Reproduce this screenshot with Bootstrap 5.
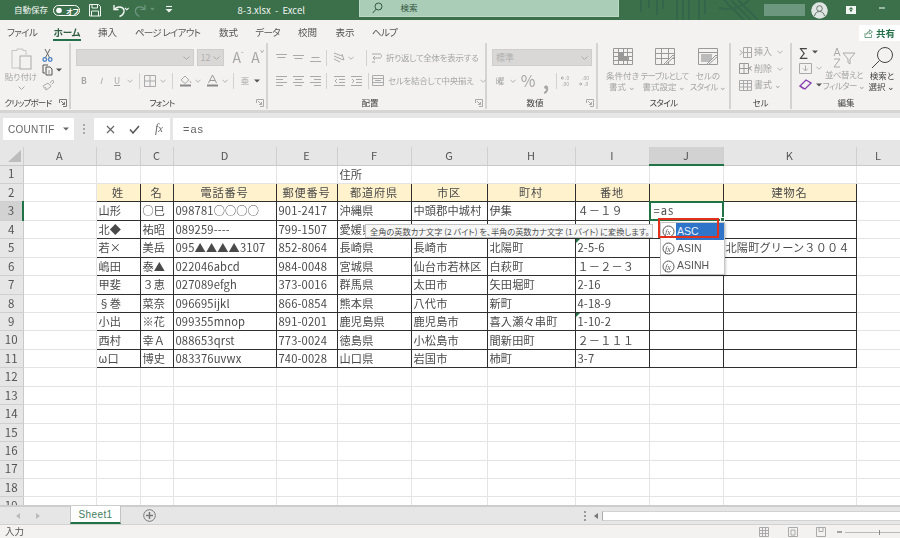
<!DOCTYPE html>
<html lang="ja">
<head>
<meta charset="utf-8">
<title>8-3.xlsx - Excel</title>
<link href="https://cdn.jsdelivr.net/npm/bootstrap@5.3.0/dist/css/bootstrap.min.css" rel="stylesheet">
<style>
html,body{margin:0;height:538px;overflow:hidden;background:#f3f2f1}
body{font-family:"Liberation Sans","Noto Sans CJK JP",sans-serif;color:#444;font-size:10px;line-height:1.1}
.xl-app{width:900px;height:538px;overflow:hidden;filter:blur(.35px)}
.ui{font-family:"Noto Sans CJK JP","Liberation Sans",sans-serif;font-feature-settings:"palt"}
.cj{font-family:"Noto Sans CJK JP",sans-serif}
.lib{font-family:"Liberation Sans",sans-serif}
svg{display:block;flex:none}
/* title bar */
.xl-title{height:20px;background:#3b704b;color:#f2f6f3;font-size:10px}
.xl-left{width:360px}
.xl-auto{margin-left:14px;width:35px;white-space:nowrap;font-size:8.5px}
.xl-doc{font-size:9.5px}
.xl-search{width:260px;height:17px;background:#a9cdb6;border:1px solid #bcd9c5;border-top:0;color:#33543f;font-size:8.5px;padding-left:12px;gap:9px;margin-bottom:3px}
.xl-blurname{width:41px;height:12px;margin:0 6px 0 0;background:#6e977f}
/* tabs */
.xl-tabs{height:23px;display:grid;grid-template-columns:44px 46px 35px 85px 37px 41px 39px 36px 43px 1fr;align-items:center;font-size:9.5px;color:#555;padding-top:1px}
.xl-tab{text-align:center;white-space:nowrap}
.xl-kn{letter-spacing:-.7px}
.xl-home{color:#2f5f40;font-weight:700}
.xl-home span{display:inline-block;border-bottom:2px solid #24704a;padding-bottom:2px;margin-bottom:-4px}
.xl-share{justify-self:end;width:41px;height:16px;background:#fff;color:#24704a;font-weight:700;font-size:9.5px;gap:3px;margin-top:2px}
/* ribbon */
.xl-ribbon{height:67px;display:flex;font-size:8.5px;color:#a6a6a6}
.rg{display:flex;flex-direction:column;height:66px;border-right:2px solid #d4d3d2;flex:none}
.rg-clip{width:71px}.rg-font{width:197px}.rg-align{width:219px}.rg-num{width:111px}.rg-style{width:133px}.rg-cell{width:61px}
.rg-edit{width:108px;border-right:0}
.rbody{flex:1;min-height:0}
.rlabel{height:12px;display:flex;align-items:center;color:#444;font-size:8.5px;white-space:nowrap}
.rlabel>span{flex:1;text-align:center}
.rlabel>svg{margin:0 2px 0 3px}
.nk{letter-spacing:-.8px}
.nk2{letter-spacing:-.6px}
.pad5{padding:5px 0 0 5px}
.rw{height:23px;display:flex;align-items:center}
.rw1{height:19px;margin-bottom:2px}
.u6{width:6px}.u8{width:8px}.u10{width:10px}.u12{width:12px}.u14{width:14px}.u16{width:16px}.u17{width:17px}.u18{width:18px}.u20{width:20px}
.u6,.u8,.u10,.u12,.u14,.u16,.u17,.u18,.u20{display:flex;justify-content:center;align-items:center;flex:none;height:16px}
.vs{width:1px;height:16px;background:#d2d1d0;flex:none}
.m3{margin:0 3px}.m5{margin:0 3px 0 5px}
.dis-box{height:17px;background:#d9d8d7;border:1px solid #cfcecd;color:#b0b0b0;font-size:9px;padding:0 3px}
.box-name{width:121px}.box-size{width:28px;margin-left:3px}.box-num{width:100px}
.xa{font-size:14px}
.xa sup{font-size:8px;top:-.5em}
.xl-big{display:flex;flex-direction:column;align-items:center;text-align:center;line-height:11px;white-space:nowrap;flex:none}
.xl-big svg{margin-bottom:1px}
.xl-sty .xl-big svg{margin-bottom:5px}
.big-paste{width:34px;margin-left:4px}
.big-s1{width:41px}.big-s2{width:43px}.big-s3{width:44px}
.big-e2{width:40px}.big-e3{width:36px;color:#444}
.sm-col{height:50px;display:flex;flex-direction:column}
.sm-row{height:16.5px;display:flex;align-items:center}
.ml-2px{margin-left:2px}.ml-3px{margin-left:3px}
.cell-ic{width:18px;margin-left:5px;display:flex;justify-content:center}
.cell-tx{width:23px;white-space:nowrap;font-size:9px}
.wrap-tx{white-space:nowrap;margin-left:3px;letter-spacing:-.3px}
.xl-v2{margin-left:11px}.xl-v3{margin-left:3px}
.xl-cells{padding-top:1px}.xl-sty{padding-top:5px}.xl-eb{padding-top:4px}.xl-edc{padding:1px 0 0 7px;width:32px}
.xl-sig{font-size:15px;color:#444;line-height:1}
.xl-comma{line-height:.6}
/* formula */
.xl-fbar{height:37px;background:#e6e6e6;border-top:3px solid #d6d5d4;padding:5px 0 0 3px;align-items:flex-start;color:#666}
.xl-name{width:71px;height:22px;background:#fff;font-size:10px;padding:0 5px;letter-spacing:.3px}
.xl-dots{width:20px;height:22px}
.xl-btns{width:76px;height:22px;background:#fff;padding:0 7px 0 12px}
.xl-fx{font-family:"Liberation Serif",serif;font-size:12px}
.xl-form{flex:1;height:22px;background:#fff;margin-left:3px;padding-left:10px;font-size:11px;letter-spacing:1px}
/* grid */
.xl-sheet{position:relative;height:358px;overflow:hidden;background:#fff}
.xl-grid{table-layout:fixed;border-collapse:collapse;width:900px;font-size:11.2px;color:#4a4a4a;font-feature-settings:normal;letter-spacing:.15px}
.c0{width:23px}.ca{width:73px}.cb{width:44px}.cc{width:33px}.cd{width:103px}.ce{width:61px}.cf{width:74px}.cg{width:76px}.ch{width:88px}.ci{width:74px}.cj2{width:74px}.ck{width:133px}.cl{width:44px}
.xl-grid th,.xl-grid td{padding:0 2px;white-space:nowrap;overflow:hidden;vertical-align:middle;line-height:1}
.xl-grid thead th{height:18px;background:#e6e6e6;border-right:1px solid #cfcfcf;border-bottom:1px solid #c9c9c9;text-align:center;font-weight:400;font-size:11px;color:#555}
.xl-grid tbody th{background:#e6e6e6;border-right:1px solid #c9c9c9;border-bottom:1px solid #cfcfcf;text-align:center;font-weight:400;font-size:11.5px;color:#555;padding:0}
.xl-grid tbody tr{height:18.45px}
.xl-grid td{border:1px solid #e4e4e4}
.xl-grid td.bx{border:1px solid #2f2f2f}
.xl-grid td.hd{background:#fff2cc;text-align:center;letter-spacing:.8px}
.xl-grid td.xl-eq{padding-left:4px;letter-spacing:1px}
.xl-grid thead th.sel{background:#d2d2d2;border-bottom:2px solid #217346}
.xl-grid tbody th.sel{background:#d2d2d2;border-right:2px solid #217346}
.tri{position:relative}
.tri::before{content:"";position:absolute;left:0;top:0;border-top:4px solid #217346;border-right:4px solid transparent}
.xl-active{position:absolute;left:649px;top:54px;width:75px;height:20px;border:2px solid #217346}
.xl-active::after{content:"";position:absolute;right:-3px;bottom:-3px;width:5px;height:5px;background:#217346;border:1px solid #fff}
.xl-tip{position:absolute;left:365px;top:77px;width:288px;height:14px;background:#f7f7f7;border:1px solid #c4c4c4;font-size:8.2px;color:#4d4d4d;padding-left:4px;white-space:nowrap;line-height:12px}
.xl-menu{position:absolute;left:660px;top:75px;width:65px;height:53px;background:#fff;border:1px solid #c6c6c6;box-shadow:1px 1px 2px rgba(0,0,0,.2);font-size:10.5px;color:#555}
.xl-item{height:17.3px;padding-left:1px;gap:1px}
.xl-item span{flex:1;height:100%;display:flex;align-items:center;padding-left:1px}
.xl-item.on span{background:#2e74c8;color:#e9f1fb}
.xl-red{position:absolute;left:658px;top:71px;width:61px;height:20px;border:2px solid #e1301e}
/* tab bar */
.xl-sheets{height:20px;background:#e6e6e6;border-top:2px solid #cdcdcd;border-bottom:1px solid #d2d2d2}
.xl-nav{width:70px;padding-left:16px;gap:16px}
.xl-stab{width:51px;height:18px;margin-top:-2px;background:#fff;border-left:1px solid #c4c4c4;border-right:1px solid #c4c4c4;border-bottom:2px solid #217346;color:#3f7d5c;font-size:10px;text-align:center;line-height:17px;letter-spacing:.4px;flex:none}
.xl-plus{margin-left:22px}
.xl-mid{flex:1}
.xl-track{width:298px;height:10px;background:#fff;border-left:1px solid #aaa;border-top:1px solid #d2d2d2;border-bottom:1px solid #d2d2d2}
/* status */
.xl-status{height:13px;background:#f3f2f1;font-size:9.5px;color:#555;padding-left:5px}
</style>
</head>
<body>
<div class="xl-app ui d-flex flex-column">

<!-- title bar -->
<div class="xl-title d-flex align-items-center">
  <div class="xl-left d-flex align-items-center">
    <span class="xl-auto">自動保存</span>
    <svg class="ms-1" width="27" height="11" viewBox="0 0 27 11"><rect x=".5" y=".5" width="26" height="10" rx="5" fill="none" stroke="#fff"/><circle cx="6" cy="5.5" r="2.8" fill="#fff"/><text x="13" y="8.5" font-size="7" fill="#fff" font-weight="700" font-family="Noto Sans CJK JP">オフ</text></svg>
    <svg class="ms-2" width="95" height="20" viewBox="0 0 95 20" fill="none" stroke="#f2f6f3">
      <path d="M1.5 4.5h9l2 2v9.5h-11z"/><path d="M4 4.5v3.5h5.5v-3.5M3.5 16v-5h7v5"/>
      <path d="M26 5v4.5h4.5" stroke-width="1.4"/><path d="M26.5 9.5c2-3.5 8.500-3.500 9.500 .5 .5 3-2 5.500-4.500 6.500" stroke-width="1.4"/>
      <path d="M37 8l1.800 1.800 1.800-1.800" stroke-width="1.100"/>
      <g stroke="#6f9880" stroke-width="1.200"><path d="M57 5v4.500h-4.500"/><path d="M56.500 9.500c-2-3.500-8-3.500-9 .5-.5 3 2 5.500 4 6.500"/><path d="M63 8l1.500 1.500 1.500-1.500"/></g>
      <path d="M78 6.500h6" stroke-width="1.100"/><path d="M77.500 9l3.500 3.500 3.500-3.500z" fill="#f2f6f3" stroke="none"/>
    </svg>
    <span class="xl-doc flex-grow-1 text-center">8-3.xlsx &nbsp;-&nbsp; Excel</span>
  </div>
  <div class="xl-search d-flex align-items-center align-self-start">
    <svg width="11" height="12" viewBox="0 0 11 12" fill="none" stroke="#2e5a40"><circle cx="6.500" cy="4.500" r="3.500"/><path d="M4 7.200L.8 11"/></svg>
    <span class="ms-2">検索</span>
  </div>
  <svg width="145" height="20" viewBox="0 0 145 20" fill="none" stroke="#33664a" stroke-width="2"><path d="M22 0v12M30 0v8M38 0v15M44 0v9M58 0v20M64 0v20M70 0v20M80 0v20M86 0v14M105 0l20 20M112 0l20 20M119 0l20 20M100 8c10 2 20 2 30-8"/></svg>
  <span class="xl-blurname"></span>
  <svg width="17" height="17" viewBox="0 0 17 17"><circle cx="8.500" cy="8.500" r="8.300" fill="#dfe6e1"/><circle cx="8.500" cy="6.500" r="2.800" fill="none" stroke="#68736c"/><path d="M3.500 14c.5-3 2.500-4.500 5-4.500s4.500 1.500 5 4.500" fill="none" stroke="#68736c"/></svg>
  <svg width="72" height="20" viewBox="0 0 72 20"><rect x="18" y="6" width="10" height="8" fill="#f2f6f3"/><path d="M23 7l-2.500 2.500h5zM22 9h2v2.500h-2z" fill="#3b704b"/><path d="M51 8h6" stroke="#d8e4dc" stroke-width="1.200"/></svg>
</div>

<!-- ribbon tabs -->
<div class="xl-tabs">
  <span class="xl-tab xl-kn">ファイル</span>
  <span class="xl-tab xl-home"><span>ホーム</span></span>
  <span class="xl-tab">挿入</span>
  <span class="xl-tab xl-kn">ページ レイアウト</span>
  <span class="xl-tab">数式</span>
  <span class="xl-tab xl-kn">データ</span>
  <span class="xl-tab">校閲</span>
  <span class="xl-tab">表示</span>
  <span class="xl-tab xl-kn">ヘルプ</span>
  <span class="xl-share d-flex align-items-center justify-content-center">
    <svg width="9" height="9" viewBox="0 0 9 9" fill="none" stroke="#6f9f84"><path d="M1 4v4.500h6.500V5.500M2.500 5.500c0-2 1.500-3 3-3V.8L8.500 3 5.500 5V3.800c-1.200 0-2.500.5-3 1.700z"/></svg>共有</span>
</div>

<!-- ribbon -->
<div class="xl-ribbon">
  <!-- clipboard -->
  <div class="rg rg-clip">
    <div class="rbody d-flex">
      <div class="xl-big big-paste pt-1">
        <svg width="21" height="23" viewBox="0 0 21 23" fill="none" stroke="#c4c3c2"><path d="M3 3.500h3V2h6v1.500h3V8M9 21H1V3.500h2" /><rect x="9" y="9" width="11" height="13" stroke="#aaa"/></svg>
        <span>貼り付け</span>
        <svg class="mt-1" width="7" height="4" viewBox="0 0 7 4" fill="none" stroke="#aaa"><path d="M.5.500l3 3 3-3"/></svg>
      </div>
      <div class="sm-col ms-1 pt-1">
        <div class="sm-row"><svg width="11" height="14" viewBox="0 0 11 14" fill="none" stroke="#666"><path d="M3 1l4.500 8.500M8 1L3.500 9.500"/><circle cx="2.800" cy="11.500" r="1.800" stroke="#4a80c4" stroke-width="1.300"/><circle cx="8.200" cy="11.500" r="1.800" stroke="#4a80c4" stroke-width="1.300"/></svg></div>
        <div class="sm-row"><svg width="11" height="12" viewBox="0 0 11 12" fill="none" stroke="#555"><path d="M6 1H1v8h2"/><path d="M4 3h4l2 2v6H4z"/><path d="M6 7h2M6 9h2" stroke="#999"/></svg><svg class="ml-3px" width="6" height="4" viewBox="0 0 6 4"><path d="M0 .5h6L3 3.500z" fill="#555"/></svg></div>
        <div class="sm-row"><svg width="12" height="12" viewBox="0 0 12 12" fill="none" stroke="#aaa"><path d="M1 7l5-3 3 3.500-5 3.500zM8 4l2.500-3L12 3 9.500 5.500"/><path d="M3 8l1.500 1.500"/></svg></div>
      </div>
    </div>
    <div class="rlabel"><span class="nk">クリップボード</span><svg width="8" height="8" viewBox="0 0 8 8" fill="none" stroke="#777"><path d="M.5 4V.5H7.500V7.500H4M2 2l3.500 3.500M5.500 3v2.500H3"/></svg></div>
  </div>

  <!-- font -->
  <div class="rg rg-font">
    <div class="rbody pad5">
      <div class="rw rw1">
        <div class="dis-box box-name d-flex align-items-center justify-content-end"><svg width="7" height="4" viewBox="0 0 7 4" fill="none" stroke="#aaa"><path d="M.5.500l3 3 3-3"/></svg></div>
        <div class="dis-box box-size d-flex align-items-center justify-content-between"><span>12</span><svg width="7" height="4" viewBox="0 0 7 4" fill="none" stroke="#aaa"><path d="M.5.500l3 3 3-3"/></svg></div>
        <span class="u20 xa ms-1">A<sup>ˆ</sup></span>
        <span class="u16 xa ml-2px">A<sup>ˇ</sup></span>
      </div>
      <div class="rw">
        <span class="u16 fw-bold">B</span><span class="u18 fst-italic">I</span><span class="u14 text-decoration-underline">U</span>
        <span class="u12"><svg width="6" height="4" viewBox="0 0 7 4" fill="none" stroke="#aaa"><path d="M.5.500l3 3 3-3"/></svg></span>
        <span class="vs m3"></span>
        <span class="u14"><svg width="12" height="12" viewBox="0 0 12 12" fill="none" stroke="#aaa"><path d="M.5.500h11v11H.5zM6 .5v11M.5 6h11"/></svg></span>
        <span class="u12"><svg width="6" height="4" viewBox="0 0 7 4" fill="none" stroke="#aaa"><path d="M.5.500l3 3 3-3"/></svg></span>
        <span class="vs m3"></span>
        <span class="u18"><svg width="13" height="13" viewBox="0 0 13 13" fill="none" stroke="#aaa"><path d="M2 6l4-4 4 4-4 3.500zM11 7l1 2"/><path d="M1 11.500h11" stroke="#888" stroke-width="2"/></svg></span>
        <span class="u8"><svg width="6" height="4" viewBox="0 0 7 4" fill="none" stroke="#aaa"><path d="M.5.500l3 3 3-3"/></svg></span>
        <span class="u20"><svg width="13" height="13" viewBox="0 0 13 13" fill="none" stroke="#999"><path d="M2.500 9L6.500 1l4 8M4 6.500h5"/><path d="M1 11.500h11" stroke="#888" stroke-width="2"/></svg></span>
        <span class="u6"><svg width="6" height="4" viewBox="0 0 7 4" fill="none" stroke="#aaa"><path d="M.5.500l3 3 3-3"/></svg></span>
        <span class="vs m5"></span>
        <span class="u16">亜</span>
        <span class="u8"><svg width="6" height="4" viewBox="0 0 6 4"><path d="M0 .5h6L3 3.500z" fill="#555"/></svg></span>
      </div>
    </div>
    <div class="rlabel"><span class="nk2">フォント</span><svg width="8" height="8" viewBox="0 0 8 8" fill="none" stroke="#aaa"><path d="M.5 4V.5H7.500V7.500H4M2 2l3.500 3.500M5.500 3v2.500H3"/></svg></div>
  </div>

  <!-- alignment -->
  <div class="rg rg-align">
    <div class="rbody pad5">
      <div class="rw rw1">
        <span class="u17"><svg width="11" height="8" viewBox="0 0 11 8" stroke="#aaa"><path d="M0 .5h11M1.500 3.500h8"/></svg></span>
        <span class="u17"><svg width="11" height="8" viewBox="0 0 11 8" stroke="#aaa"><path d="M0 1.500h11M1.500 4.500h8"/></svg></span>
        <span class="u17"><svg width="11" height="8" viewBox="0 0 11 8" stroke="#aaa"><path d="M1.500 3.500h8M0 7.500h11"/></svg></span>
        <span class="vs ml-2px me-1"></span>
        <span class="u16"><svg width="12" height="12" viewBox="0 0 12 12" fill="none" stroke="#aaa"><path d="M1 1l8 3M1 4l7 3M1 7l6 3M9 2l2 6-3-1"/></svg></span>
        <span class="u8"><svg width="6" height="4" viewBox="0 0 7 4" fill="none" stroke="#aaa"><path d="M.5.500l3 3 3-3"/></svg></span>
        <span class="vs xl-v2"></span>
        <span class="u14 ml-2px"><svg width="11" height="12" viewBox="0 0 11 12" fill="none" stroke="#aaa"><path d="M1 2h8c2 0 2 4 0 4H2l2-2M2 6l2 2M1 10h3"/></svg></span>
        <span class="wrap-tx">折り返して全体を表示する</span>
      </div>
      <div class="rw">
        <span class="u17"><svg width="11" height="10" viewBox="0 0 11 10" stroke="#aaa"><path d="M0 .5h11M0 3.500h7M0 6.500h11M0 9.500h7"/></svg></span>
        <span class="u17"><svg width="11" height="10" viewBox="0 0 11 10" stroke="#aaa"><path d="M0 .5h11M2 3.500h7M0 6.500h11M2 9.500h7"/></svg></span>
        <span class="u17"><svg width="11" height="10" viewBox="0 0 11 10" stroke="#aaa"><path d="M0 .5h11M4 3.500h7M0 6.500h11M4 9.500h7"/></svg></span>
        <span class="vs ml-2px me-1"></span>
        <span class="u17"><svg width="11" height="10" viewBox="0 0 11 10" fill="none" stroke="#aaa"><path d="M0 .5h11M5 3.500h6M5 6.500h6M0 9.500h11M3 3l-2 2 2 2"/></svg></span>
        <span class="u17"><svg width="11" height="10" viewBox="0 0 11 10" fill="none" stroke="#aaa"><path d="M0 .5h11M5 3.500h6M5 6.500h6M0 9.500h11M1 3l2 2-2 2"/></svg></span>
        <span class="vs xl-v3"></span>
        <span class="u14 ml-2px"><svg width="12" height="11" viewBox="0 0 12 11" fill="none" stroke="#aaa"><path d="M.5.500h11v10H.5zM.5 3.500h11M.5 7.500h11M3 5.500h6"/></svg></span>
        <span class="wrap-tx">セルを結合して中央揃え</span>
        <span class="u10 ms-1"><svg width="6" height="4" viewBox="0 0 7 4" fill="none" stroke="#aaa"><path d="M.5.500l3 3 3-3"/></svg></span>
      </div>
    </div>
    <div class="rlabel"><span>配置</span><svg width="8" height="8" viewBox="0 0 8 8" fill="none" stroke="#aaa"><path d="M.5 4V.5H7.500V7.500H4M2 2l3.500 3.500M5.500 3v2.500H3"/></svg></div>
  </div>

  <!-- number -->
  <div class="rg rg-num">
    <div class="rbody pad5">
      <div class="rw rw1">
        <div class="dis-box box-num d-flex align-items-center justify-content-between"><span>標準</span><svg width="7" height="4" viewBox="0 0 7 4" fill="none" stroke="#aaa"><path d="M.5.500l3 3 3-3"/></svg></div>
      </div>
      <div class="rw">
        <span class="u16">曜</span>
        <span class="u10"><svg width="6" height="4" viewBox="0 0 7 4" fill="none" stroke="#aaa"><path d="M.5.500l3 3 3-3"/></svg></span>
        <span class="u20 fs-6">%</span>
        <span class="u16 fw-bold fs-5 xl-comma">,</span>
        <span class="vs ml-2px"></span>
        <span class="u20"><svg width="12" height="12" viewBox="0 0 12 12" fill="none" stroke="#aaa"><path d="M3 3H0M1.500 1.500L0 3l1.500 1.500"/><text x="4" y="5" font-size="5" fill="#aaa" stroke="none">.0</text><text x="1" y="11" font-size="5" fill="#aaa" stroke="none">.00</text></svg></span>
        <span class="u16"><svg width="12" height="12" viewBox="0 0 12 12" fill="none" stroke="#aaa"><text x="3" y="5" font-size="5" fill="#aaa" stroke="none">.00</text><path d="M0 9h3M1.500 7.500L3 9l-1.500 1.500"/><text x="5" y="11" font-size="5" fill="#aaa" stroke="none">.0</text></svg></span>
      </div>
    </div>
    <div class="rlabel"><span>数値</span><svg width="8" height="8" viewBox="0 0 8 8" fill="none" stroke="#aaa"><path d="M.5 4V.5H7.500V7.500H4M2 2l3.500 3.500M5.500 3v2.500H3"/></svg></div>
  </div>

  <!-- styles -->
  <div class="rg rg-style">
    <div class="rbody d-flex ps-1 xl-sty">
      <div class="xl-big big-s1"><svg width="20" height="17" viewBox="0 0 20 17" fill="none" stroke="#999"><path d="M.5.500h19v16H.5zM.5 4.500h19M.5 8.500h19M.5 12.500h19M5.500.5v16M10.500.5v16M14.500.5v16"/><path d="M5.500 4.500h5v4h5v4h-10z" fill="#999"/></svg><span>条件付き</span><span>書式 ⌄</span></div>
      <div class="xl-big big-s2"><svg width="20" height="17" viewBox="0 0 20 17" fill="none" stroke="#999"><path d="M.5.500h19v16H.5zM.5 5.500h19M.5 10.500h19M6.500.5v16M13.500.5v16"/><path d="M9 16l9-9 1.500 1.500-9 8z" fill="#f3f2f1"/></svg><span class="nk">テーブルとして</span><span>書式設定 ⌄</span></div>
      <div class="xl-big big-s3"><svg width="20" height="17" viewBox="0 0 20 17" fill="none" stroke="#999"><path d="M.5.500h19v16H.5zM.5 4.500h19"/><rect x="3" y="6" width="11" height="8" fill="#bbb" stroke="none"/><path d="M9 16l9-9 1.500 1.500-9 8z" fill="#f3f2f1"/></svg><span>セルの</span><span class="nk2">スタイル ⌄</span></div>
    </div>
    <div class="rlabel"><span class="nk2">スタイル</span></div>
  </div>

  <!-- cells -->
  <div class="rg rg-cell">
    <div class="rbody sm-col xl-cells">
      <div class="sm-row"><span class="cell-ic"><svg width="13" height="11" viewBox="0 0 13 11" fill="none" stroke="#aaa"><path d="M4.500.5h8v10h-8zM8.500.5v10M4.500 5.500h8M.5 3l3 2.500-3 2.500"/></svg></span><span class="cell-tx">挿入</span><span class="u6"><svg width="6" height="4" viewBox="0 0 7 4" fill="none" stroke="#aaa"><path d="M.5.500l3 3 3-3"/></svg></span></div>
      <div class="sm-row"><span class="cell-ic"><svg width="13" height="11" viewBox="0 0 13 11" fill="none" stroke="#999"><path d="M.5.500h9v10h-9zM5 .5v10M.5 5.500h9M9 3l3.500 4.500M12.500 3L9 7.500"/></svg></span><span class="cell-tx">削除</span><span class="u6"><svg width="6" height="4" viewBox="0 0 7 4" fill="none" stroke="#aaa"><path d="M.5.500l3 3 3-3"/></svg></span></div>
      <div class="sm-row"><span class="cell-ic"><svg width="13" height="11" viewBox="0 0 13 11" fill="none" stroke="#aaa"><path d="M.5.500h12v10H.5zM.5 3.500h12M4.500.5v10M8.500.5v10M.5 7h12"/></svg></span><span class="cell-tx">書式 ⌄</span></div>
    </div>
    <div class="rlabel"><span>セル</span></div>
  </div>

  <!-- editing -->
  <div class="rg rg-edit">
    <div class="rbody d-flex">
      <div class="sm-col xl-edc">
        <div class="sm-row"><span class="xl-sig">Σ</span><svg class="ms-1" width="6" height="4" viewBox="0 0 6 4"><path d="M0 .5h6L3 3.500z" fill="#555"/></svg></div>
        <div class="sm-row"><svg width="13" height="11" viewBox="0 0 13 11" fill="none" stroke="#aaa"><path d="M.5.500h12v10H.5zM6.500 2.500v5M4 5.500l2.500 2.500 2.500-2.500"/></svg><svg class="ms-1" width="6" height="4" viewBox="0 0 7 4" fill="none" stroke="#aaa"><path d="M.5.500l3 3 3-3"/></svg></div>
        <div class="sm-row"><svg width="13" height="11" viewBox="0 0 13 11" fill="none" stroke="#8a3fb0" stroke-width="1.300"><path d="M1 7l6-6 5 3-6 6z"/><path d="M1 7l4 3" /></svg><svg class="ms-1" width="6" height="4" viewBox="0 0 6 4"><path d="M0 .5h6L3 3.500z" fill="#555"/></svg></div>
      </div>
      <div class="xl-big big-e2 xl-eb"><svg width="24" height="21" viewBox="0 0 24 21" fill="none" stroke="#aaa"><path d="M2 9L5 1l3 8M3 6.500h4M2 12h6l-6 8h6M11 6h12l-5 6v5l-2-1.500V12z"/></svg><span class="nk2">並べ替えと</span><span class="nk2">フィルター ⌄</span></div>
      <div class="xl-big big-e3 xl-eb"><svg width="23" height="22" viewBox="0 0 23 22" fill="none" stroke="#444"><circle cx="14" cy="8" r="7.500"/><path d="M8.500 13.500L1 21"/></svg><span>検索と</span><span>選択 ⌄</span></div>
    </div>
    <div class="rlabel"><span>編集</span></div>
  </div>
</div>

<!-- formula bar -->
<div class="xl-fbar d-flex">
  <div class="xl-name d-flex align-items-center justify-content-between lib"><span>COUNTIF</span><svg width="6" height="4" viewBox="0 0 6 4"><path d="M0 .5h6L3 3.500z" fill="#666"/></svg></div>
  <div class="xl-dots d-flex align-items-center justify-content-center"><svg width="2" height="10" viewBox="0 0 2 10" fill="#aaa"><rect y="0" width="2" height="2"/><rect y="4" width="2" height="2"/><rect y="8" width="2" height="2"/></svg></div>
  <div class="xl-btns d-flex align-items-center justify-content-between">
    <svg width="9" height="9" viewBox="0 0 9 9" fill="none" stroke="#666" stroke-width="1.200"><path d="M1 1l7 7M8 1L1 8"/></svg>
    <svg width="11" height="9" viewBox="0 0 11 9" fill="none" stroke="#555" stroke-width="1.500"><path d="M1 4.500L4 8l6-7"/></svg>
    <span class="xl-fx fst-italic">f<small>x</small></span>
  </div>
  <div class="xl-form d-flex align-items-center lib">=as</div>
</div>

<!-- sheet -->
<div class="xl-sheet">
<table class="xl-grid">
<colgroup><col class="c0"><col class="ca"><col class="cb"><col class="cc"><col class="cd"><col class="ce"><col class="cf"><col class="cg"><col class="ch"><col class="ci"><col class="cj2"><col class="ck"><col class="cl"></colgroup>
<thead><tr>
<th><svg width="16" height="14" viewBox="0 0 16 14" class="ms-1"><path d="M15 1v12H2z" fill="#bdbdbd"/></svg></th><th>A</th><th>B</th><th>C</th><th>D</th><th>E</th><th>F</th><th>G</th><th>H</th><th>I</th><th class="sel">J</th><th>K</th><th>L</th>
</tr></thead>
<tbody>
<tr><th>1</th><td></td><td></td><td></td><td></td><td></td><td>住所</td><td></td><td></td><td></td><td></td><td></td><td></td></tr>
<tr><th>2</th><td></td><td class="bx hd">姓</td><td class="bx hd">名</td><td class="bx hd">電話番号</td><td class="bx hd">郵便番号</td><td class="bx hd">都道府県</td><td class="bx hd">市区</td><td class="bx hd">町村</td><td class="bx hd">番地</td><td class="bx hd"></td><td class="bx hd">建物名</td><td></td></tr>
<tr><th class="sel">3</th><td></td><td class="bx">山形</td><td class="bx"><span class="cj">○</span>巳</td><td class="bx">098781<span class="cj">○○○○</span></td><td class="bx">901-2417</td><td class="bx">沖縄県</td><td class="bx">中頭郡中城村</td><td class="bx">伊集</td><td class="bx"><span class="cj">４－１９</span></td><td class="bx xl-eq">=as</td><td class="bx"></td><td></td></tr>
<tr><th>4</th><td></td><td class="bx">北<span class="cj">◆</span></td><td class="bx">祐昭</td><td class="bx">089259----</td><td class="bx">799-1507</td><td class="bx">愛媛県</td><td class="bx"></td><td class="bx"></td><td class="bx"></td><td class="bx"></td><td class="bx"></td><td></td></tr>
<tr><th>5</th><td></td><td class="bx">若<span class="cj">×</span></td><td class="bx">美岳</td><td class="bx">095<span class="cj">▲▲▲▲</span>3107</td><td class="bx">852-8064</td><td class="bx">長崎県</td><td class="bx">長崎市</td><td class="bx">北陽町</td><td class="bx tri">2-5-6</td><td class="bx"></td><td class="bx">北陽町グリーン３００４</td><td></td></tr>
<tr><th>6</th><td></td><td class="bx">嶋田</td><td class="bx">泰<span class="cj">▲</span></td><td class="bx">022046abcd</td><td class="bx">984-0048</td><td class="bx">宮城県</td><td class="bx">仙台市若林区</td><td class="bx">白萩町</td><td class="bx"><span class="cj">１－２－３</span></td><td class="bx"></td><td class="bx"></td><td></td></tr>
<tr><th>7</th><td></td><td class="bx">甲斐</td><td class="bx"><span class="cj">３</span>恵</td><td class="bx">027089efgh</td><td class="bx">373-0016</td><td class="bx">群馬県</td><td class="bx">太田市</td><td class="bx">矢田堀町</td><td class="bx">2-16</td><td class="bx"></td><td class="bx"></td><td></td></tr>
<tr><th>8</th><td></td><td class="bx"><span class="cj">§</span>巻</td><td class="bx">菜奈</td><td class="bx">096695ijkl</td><td class="bx">866-0854</td><td class="bx">熊本県</td><td class="bx">八代市</td><td class="bx">新町</td><td class="bx">4-18-<span class="cj">9</span></td><td class="bx"></td><td class="bx"></td><td></td></tr>
<tr><th>9</th><td></td><td class="bx">小出</td><td class="bx"><span class="cj">※</span>花</td><td class="bx">099355mnop</td><td class="bx">891-0201</td><td class="bx">鹿児島県</td><td class="bx">鹿児島市</td><td class="bx">喜入瀬々串町</td><td class="bx tri">1-10-2</td><td class="bx"></td><td class="bx"></td><td></td></tr>
<tr><th>10</th><td></td><td class="bx">西村</td><td class="bx">幸<span class="cj">Ａ</span></td><td class="bx">088653qrst</td><td class="bx">773-0024</td><td class="bx">徳島県</td><td class="bx">小松島市</td><td class="bx">間新田町</td><td class="bx"><span class="cj">２－１１１</span></td><td class="bx"></td><td class="bx"></td><td></td></tr>
<tr><th>11</th><td></td><td class="bx"><span class="cj">ω</span>口</td><td class="bx">博史</td><td class="bx">083376uvwx</td><td class="bx">740-0028</td><td class="bx">山口県</td><td class="bx">岩国市</td><td class="bx">柿町</td><td class="bx">3-7</td><td class="bx"></td><td class="bx"></td><td></td></tr>
<tr><th>12</th><td></td><td></td><td></td><td></td><td></td><td></td><td></td><td></td><td></td><td></td><td></td><td></td></tr>
<tr><th>13</th><td></td><td></td><td></td><td></td><td></td><td></td><td></td><td></td><td></td><td></td><td></td><td></td></tr>
<tr><th>14</th><td></td><td></td><td></td><td></td><td></td><td></td><td></td><td></td><td></td><td></td><td></td><td></td></tr>
<tr><th>15</th><td></td><td></td><td></td><td></td><td></td><td></td><td></td><td></td><td></td><td></td><td></td><td></td></tr>
<tr><th>16</th><td></td><td></td><td></td><td></td><td></td><td></td><td></td><td></td><td></td><td></td><td></td><td></td></tr>
<tr><th>17</th><td></td><td></td><td></td><td></td><td></td><td></td><td></td><td></td><td></td><td></td><td></td><td></td></tr>
<tr><th>18</th><td></td><td></td><td></td><td></td><td></td><td></td><td></td><td></td><td></td><td></td><td></td><td></td></tr>
<tr><th>19</th><td></td><td></td><td></td><td></td><td></td><td></td><td></td><td></td><td></td><td></td><td></td><td></td></tr>
</tbody>
</table>
<div class="xl-active"></div>
<div class="xl-tip">全角の英数カナ文字 (2 バイト) を、半角の英数カナ文字 (1 バイト) に変換します。</div>
<div class="xl-menu">
  <div class="xl-item on d-flex align-items-center"><svg width="13" height="13" viewBox="0 0 13 13"><circle cx="6.500" cy="6.500" r="5.500" fill="none" stroke="#555"/><text x="3" y="9.500" font-size="8" font-style="italic" fill="#555" font-family="Liberation Serif">fx</text></svg><span class="lib">ASC</span></div>
  <div class="xl-item d-flex align-items-center"><svg width="13" height="13" viewBox="0 0 13 13"><circle cx="6.500" cy="6.500" r="5.500" fill="none" stroke="#555"/><text x="3" y="9.500" font-size="8" font-style="italic" fill="#555" font-family="Liberation Serif">fx</text></svg><span class="lib">ASIN</span></div>
  <div class="xl-item d-flex align-items-center"><svg width="13" height="13" viewBox="0 0 13 13"><circle cx="6.500" cy="6.500" r="5.500" fill="none" stroke="#555"/><text x="3" y="9.500" font-size="8" font-style="italic" fill="#555" font-family="Liberation Serif">fx</text></svg><span class="lib">ASINH</span></div>
</div>
<div class="xl-red"></div>
</div>

<!-- sheet tabs -->
<div class="xl-sheets d-flex align-items-center">
  <div class="xl-nav d-flex align-items-center">
    <svg width="4" height="6" viewBox="0 0 4 6"><path d="M4 0v6L0 3z" fill="#bbb"/></svg>
    <svg width="4" height="6" viewBox="0 0 4 6"><path d="M0 0v6l4-3z" fill="#bbb"/></svg>
  </div>
  <div class="xl-stab lib">Sheet1</div>
  <svg class="xl-plus" width="13" height="13" viewBox="0 0 13 13" fill="none" stroke="#777"><circle cx="6.500" cy="6.500" r="5.800"/><path d="M6.500 3v7M3 6.500h7" stroke-width="1.500"/></svg>
  <div class="xl-mid d-flex justify-content-end align-items-center pe-1"><svg class="me-2" width="2" height="10" viewBox="0 0 2 10" fill="#999"><rect width="2" height="2"/><rect y="4" width="2" height="2"/><rect y="8" width="2" height="2"/></svg><svg width="4" height="6" viewBox="0 0 4 6"><path d="M4 0v6L0 3z" fill="#777"/></svg></div>
  <div class="xl-track"></div>
</div>

<!-- status bar -->
<div class="xl-status d-flex align-items-center justify-content-between">
  <span>入力</span>
  <svg width="141" height="12" viewBox="0 0 141 12" fill="none" stroke="#aaa"><path d="M.5 1.500h9v9h-9zM3.500 1.500v9M6.500 1.500v9M.5 4.500h9M.5 7.500h9"/><path d="M29.500 1.500h9v9h-9zM32 4h4v5h-4z"/><path d="M57.500 1.500h9v9h-9zM60 1.500v4h4v-4"/><path d="M78 6h5" stroke="#888" stroke-width="1.500"/><path d="M86 6.500h55" stroke="#bbb"/><path d="M120.500 4v5" stroke="#888"/></svg>
</div>
</div>
</body>
</html>
